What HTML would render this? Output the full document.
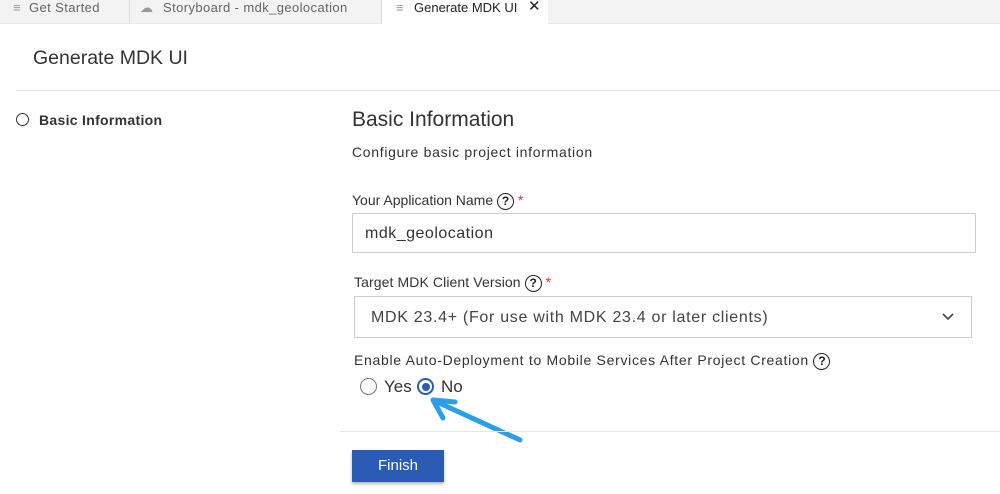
<!DOCTYPE html>
<html><head><meta charset="utf-8"><style>
*{margin:0;padding:0;box-sizing:border-box}
body{width:1000px;height:494px;overflow:hidden;background:#fff;font-family:"Liberation Sans",sans-serif;color:#333;position:relative}
.abs{position:absolute;white-space:nowrap}
.tabs{position:absolute;left:0;top:0;width:1000px;height:24px;background:#f3f3f3;border-bottom:1px solid #e8e8e8}
.tab{position:absolute;top:0;height:24px;font-size:13px;color:#666;line-height:16px}
.q{display:inline-block;width:17px;height:17px;border:1.6px solid #222;border-radius:50%;font-size:12px;font-weight:bold;text-align:center;line-height:14px;color:#222;vertical-align:middle;letter-spacing:0}
.star{color:#e03030}
.radio{position:absolute;width:17px;height:17px;border-radius:50%;border:1.5px solid #777;background:#fff}
</style></head><body>
<div class="tabs">
 <div class="tab" style="left:0;width:130px;border-right:1px solid #ddd"><span class="abs" style="left:13px;top:0;color:#999">≡</span><span class="abs" style="left:29px;top:0;letter-spacing:.4px">Get Started</span></div>
 <div class="tab" style="left:130px;width:252px;border-right:1px solid #ddd"><span class="abs" style="left:10px;top:0;color:#999">☁</span><span class="abs" style="left:33px;top:0;letter-spacing:.4px">Storyboard - mdk_geolocation</span></div>
 <div class="tab" style="left:382px;width:166px;background:#fff;height:25px;color:#222"><span class="abs" style="left:14px;top:0;color:#999">≡</span><span class="abs" style="left:32px;top:0">Generate MDK UI</span><span class="abs" style="left:146px;top:-1px;font-size:15px">✕</span></div>
</div>
<div class="abs" style="left:33px;top:47px;font-size:19.5px;color:#333">Generate MDK UI</div>
<div class="abs" style="left:16px;top:90px;width:984px;height:1px;background:#e4e4e4"></div>
<div class="radio" style="left:16px;top:113px;width:13px;height:13px;border-color:#333"></div>
<div class="abs" style="left:39px;top:112px;font-size:14px;font-weight:bold;color:#333;letter-spacing:.3px">Basic Information</div>
<div class="abs" style="left:352px;top:108px;font-size:21px;color:#333">Basic Information</div>
<div class="abs" style="left:352px;top:144px;font-size:14px;color:#333;letter-spacing:.7px">Configure basic project information</div>
<div class="abs" style="left:352px;top:192px;font-size:14px;color:#333">Your Application Name <span class="q">?</span> <span class="star">*</span></div>
<div class="abs" style="left:352px;top:213px;width:624px;height:40px;border:1px solid #ccc;font-size:16px;padding:11px 0 0 12px;color:#333;letter-spacing:.5px">mdk_geolocation</div>
<div class="abs" style="left:354px;top:274px;font-size:14px;color:#333;letter-spacing:.1px">Target MDK Client Version <span class="q">?</span> <span class="star">*</span></div>
<div class="abs" style="left:354px;top:296px;width:618px;height:42px;border:1px solid #ccc;font-size:16px;padding:12px 0 0 16px;color:#444;letter-spacing:.7px">MDK 23.4+ (For use with MDK 23.4 or later clients)</div>
<svg class="abs" style="left:941px;top:312px" width="14" height="10"><path d="M2 2 L7 7 L12 2" fill="none" stroke="#444" stroke-width="1.6"/></svg>
<div class="abs" style="left:354px;top:352px;font-size:14px;color:#333;letter-spacing:.7px">Enable Auto-Deployment to Mobile Services After Project Creation <span class="q">?</span></div>
<div class="radio" style="left:360px;top:378px"></div>
<div class="abs" style="left:384px;top:377px;font-size:17px;color:#333">Yes</div>
<div class="radio" style="left:417px;top:378px;border:2px solid #2a5bb5"><div style="position:absolute;left:2.5px;top:2.5px;width:8px;height:8px;border-radius:50%;background:#2a5bb5"></div></div>
<div class="abs" style="left:441px;top:377px;font-size:17px;color:#333">No</div>
<svg class="abs" style="left:425px;top:390px" width="110" height="60"><path d="M95 50 L12 12" stroke="#2a9ee8" stroke-width="5" stroke-linecap="round" fill="none"/><path d="M8 10 L30 12 M8 10 L18 28" stroke="#2a9ee8" stroke-width="5" stroke-linecap="round" fill="none"/></svg>
<div class="abs" style="left:340px;top:431px;width:660px;height:1px;background:#e8e8e8"></div>
<div class="abs" style="left:352px;top:450px;width:92px;height:32px;background:#2a5bb5;color:#fff;font-size:15px;text-align:center;line-height:31px;box-shadow:0 2px 3px rgba(0,0,0,.3)">Finish</div>
</body></html>
